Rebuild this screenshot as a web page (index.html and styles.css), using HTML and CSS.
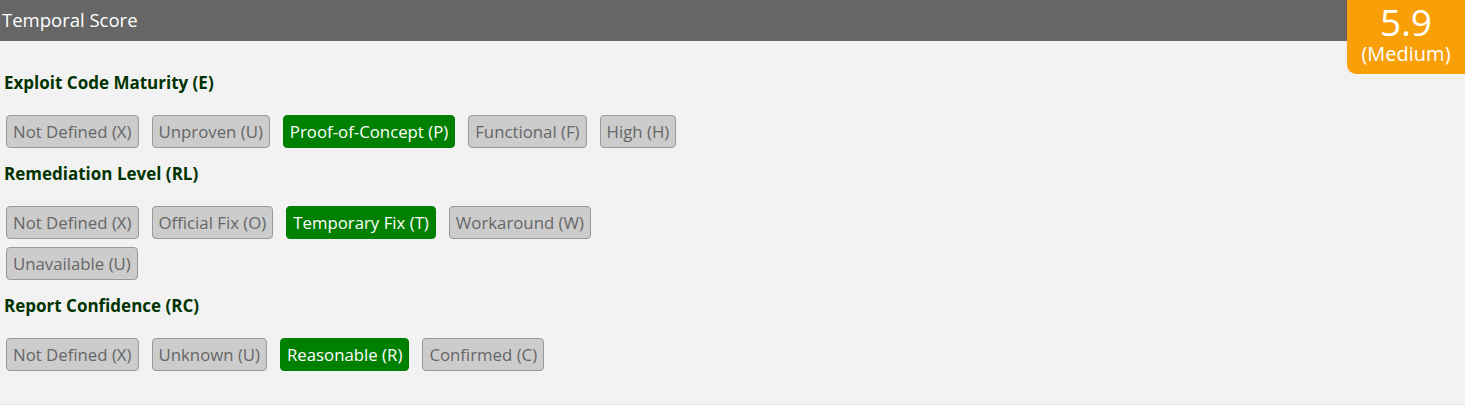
FILE: index.html
```html
<!DOCTYPE html>
<html>
<head>
<meta charset="utf-8">
<link rel="stylesheet" href="styles.css">
</head>
<body>
<section class="panel">
  <header class="panel-head">
    <h2 class="panel-title">Temporal Score</h2>
    <div class="score">
      <div class="score-num">5.9</div>
      <div class="score-sev">(Medium)</div>
    </div>
  </header>
  <div class="panel-body">
    <div class="metric">
      <h3 class="metric-name">Exploit Code Maturity (E)</h3>
      <div class="opts">
        <button class="opt">Not Defined (X)</button>
        <button class="opt">Unproven (U)</button>
        <button class="opt on">Proof-of-Concept (P)</button>
        <button class="opt">Functional (F)</button>
        <button class="opt">High (H)</button>
      </div>
    </div>
    <div class="metric">
      <h3 class="metric-name">Remediation Level (RL)</h3>
      <div class="opts">
        <button class="opt">Not Defined (X)</button>
        <button class="opt">Official Fix (O)</button>
        <button class="opt on">Temporary Fix (T)</button>
        <button class="opt">Workaround (W)</button>
        <button class="opt">Unavailable (U)</button>
      </div>
    </div>
    <div class="metric">
      <h3 class="metric-name">Report Confidence (RC)</h3>
      <div class="opts">
        <button class="opt">Not Defined (X)</button>
        <button class="opt">Unknown (U)</button>
        <button class="opt on">Reasonable (R)</button>
        <button class="opt">Confirmed (C)</button>
      </div>
    </div>
  </div>
</section>
</body>
</html>
```
FILE: styles.css
```css
* { box-sizing: border-box; }
html, body { margin: 0; padding: 0; background: #fff; }
body { font-family: "Open Sans", "Noto Sans", sans-serif; font-size: 16px; }
.panel {
  background: #f2f2f2;
  height: 405px;
  border-bottom: 1px solid #e0e0e0;
}
.panel-head {
  position: relative;
  background: #666;
  height: 41px;
  display: flex;
  align-items: center;
  padding-left: 2px;
}
.panel-title {
  margin: 0;
  font-weight: normal;
  font-size: 18.5px;
  color: #fff;
  line-height: 24px;
  padding-bottom: 2px;
}
.score {
  position: absolute;
  top: 0;
  right: 0;
  width: 118px;
  height: 74px;
  background: #f9a009;
  color: #fff;
  border-bottom-left-radius: 9px;
  display: flex;
  flex-direction: column;
  align-items: center;
  padding-top: 3px;
}
.score-num { font-size: 37px; line-height: 38px; }
.score-sev { font-size: 20px; line-height: 26px; }
.panel-body { padding: 30px 0 0 0; width: 732px; }
.metric { display: flex; flex-direction: column; }
.metric-name {
  margin: 0 0 0 4px;
  font-size: 17px;
  font-weight: bold;
  color: #003300;
  line-height: 24px;
}
.opts {
  display: flex;
  flex-wrap: wrap;
  gap: 8px 13px;
  padding: 20px 6px 14px 6px;
}
.opt {
  font-family: inherit;
  font-size: 16.8px;
  line-height: 22px;
  height: 33px;
  padding: 4px 6px;
  border: 1px solid #999;
  border-radius: 4px;
  background: #ccc;
  color: #666;
  margin: 0;
}
.opt.on {
  background: #008000;
  border-color: #008000;
  color: #fff;
}
```
